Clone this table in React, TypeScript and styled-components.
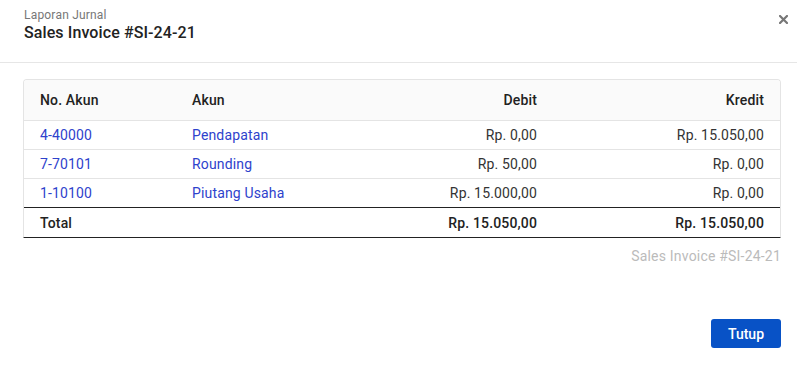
import React from "react";
import styled, { createGlobalStyle } from "styled-components";

const GlobalStyle = createGlobalStyle`
  body {
    margin: 0;
    background: #ffffff;
    font-family: Roboto, "Liberation Sans", Arial, sans-serif;
    color: #222;
  }
`;

interface Row {
  code: string;
  name: string;
  debit: string;
  credit: string;
}

const rows: Row[] = [
  { code: "4-40000", name: "Pendapatan", debit: "Rp. 0,00", credit: "Rp. 15.050,00" },
  { code: "7-70101", name: "Rounding", debit: "Rp. 50,00", credit: "Rp. 0,00" },
  { code: "1-10100", name: "Piutang Usaha", debit: "Rp. 15.000,00", credit: "Rp. 0,00" },
];

function App() {
  return (
    <>
      <GlobalStyle />
      <Modal>
        <Header>
          <div>
            <Label>Laporan Jurnal</Label>
            <Title>Sales Invoice #SI-24-21</Title>
          </div>
          <CloseButton aria-label="close">
            <svg width="9" height="9" viewBox="0 0 9 9">
              <path d="M1 1L8 8M8 1L1 8" stroke="#777" strokeWidth="2.2" strokeLinecap="square" />
            </svg>
          </CloseButton>
        </Header>

        <Body>
          <TableWrap>
            <Table>
              <colgroup>
                <col style={{ width: 152 }} />
                <col style={{ width: 152 }} />
                <col style={{ width: 225 }} />
                <col style={{ width: 227 }} />
              </colgroup>
              <thead>
                <tr>
                  <Th>No. Akun</Th>
                  <Th>Akun</Th>
                  <Th $right>Debit</Th>
                  <Th $right>Kredit</Th>
                </tr>
              </thead>
              <tbody>
                {rows.map((r) => (
                  <tr key={r.code}>
                    <Td><LinkText>{r.code}</LinkText></Td>
                    <Td><LinkText>{r.name}</LinkText></Td>
                    <Td $right>{r.debit}</Td>
                    <Td $right>{r.credit}</Td>
                  </tr>
                ))}
              </tbody>
              <tfoot>
                <tr>
                  <TotalCell>Total</TotalCell>
                  <TotalCell />
                  <TotalCell $right>Rp. 15.050,00</TotalCell>
                  <TotalCell $right>Rp. 15.050,00</TotalCell>
                </tr>
              </tfoot>
            </Table>
          </TableWrap>
          <Reference>Sales Invoice #SI-24-21</Reference>
        </Body>

        <Footer>
          <PrimaryButton>Tutup</PrimaryButton>
        </Footer>
      </Modal>
    </>
  );
}

const Modal = styled.div`
  width: 797px;
  height: 378px;
  background: #fff;
  display: flex;
  flex-direction: column;
`;

const Header = styled.div`
  display: flex;
  justify-content: space-between;
  align-items: flex-start;
  padding: 8px 9px 19px 24px;
  border-bottom: 1px solid #e6e6e6;
`;

const Label = styled.div`
  font-size: 12px;
  line-height: 15px;
  color: #777;
  letter-spacing: 0.2px;
`;

const Title = styled.div`
  font-size: 16px;
  line-height: 20px;
  font-weight: 500;
  color: #222;
  letter-spacing: 0.1px;
`;

const CloseButton = styled.button`
  border: none;
  background: none;
  padding: 0;
  margin-top: 7px;
  width: 9px;
  height: 9px;
  display: flex;
  cursor: pointer;
`;

const Body = styled.div`
  padding: 16px 16px 0 23px;
  display: flex;
  flex-direction: column;
`;

const TableWrap = styled.div`
  border: 1px solid #e4e4e4;
  border-bottom: 1px solid #222;
  border-radius: 4px 4px 0 0;
  overflow: hidden;
`;

const Table = styled.table`
  width: 756px;
  border-collapse: collapse;
  table-layout: fixed;
  font-size: 14px;
  letter-spacing: 0.15px;
`;

const Th = styled.th<{ $right?: boolean }>`
  height: 40px;
  padding: 0 16px;
  background: #fafafa;
  font-weight: 500;
  color: #222;
  text-align: ${(p) => (p.$right ? "right" : "left")};
  border-bottom: 1px solid #e4e4e4;
`;

const Td = styled.td<{ $right?: boolean }>`
  height: 28px;
  padding: 0 16px;
  color: #333;
  text-align: ${(p) => (p.$right ? "right" : "left")};
  border-bottom: 1px solid #e4e4e4;
  tr:last-child > & {
    border-bottom: 1px solid #222;
  }
`;

const LinkText = styled.span`
  color: #2e42cc;
  cursor: pointer;
`;

const TotalCell = styled.td<{ $right?: boolean }>`
  height: 29px;
  padding: 0 16px;
  font-weight: 500;
  color: #222;
  text-align: ${(p) => (p.$right ? "right" : "left")};
`;

const Reference = styled.div`
  margin-top: 10px;
  align-self: flex-end;
  font-size: 14px;
  line-height: 17px;
  color: #bbb;
  letter-spacing: 0.2px;
`;

const Footer = styled.div`
  display: flex;
  justify-content: flex-end;
  padding: 54px 16px 0 0;
`;

const PrimaryButton = styled.button`
  height: 29px;
  padding: 0 17px;
  border: none;
  border-radius: 3px;
  background: #0852c6;
  color: #fff;
  font-family: inherit;
  font-size: 14px;
  font-weight: 500;
  cursor: pointer;
`;

export default App;
